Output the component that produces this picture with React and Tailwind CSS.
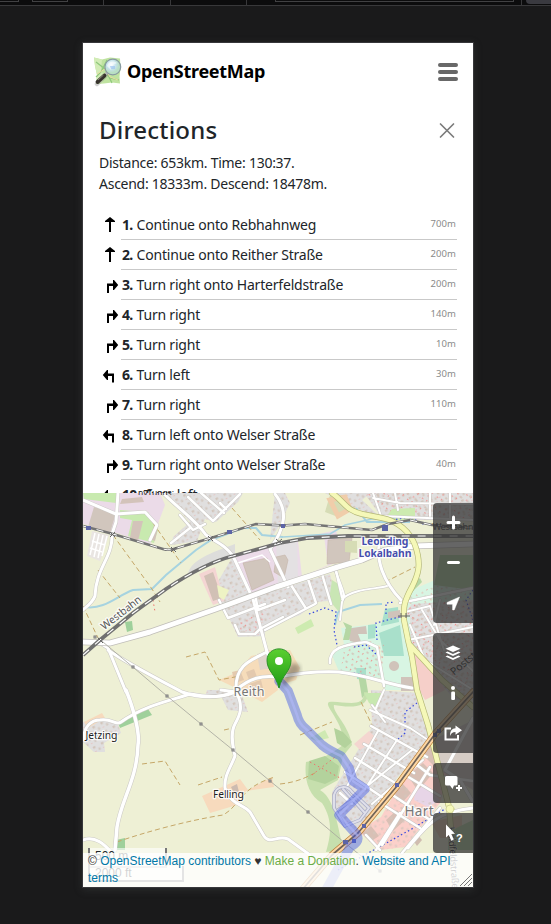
const steps = [
  ["up", "Continue onto Rebhahnweg", "700m"],
  ["up", "Continue onto Reither Straße", "200m"],
  ["right", "Turn right onto Harterfeldstraße", "200m"],
  ["right", "Turn right", "140m"],
  ["right", "Turn right", "10m"],
  ["left", "Turn left", "30m"],
  ["right", "Turn right", "110m"],
  ["left", "Turn left onto Welser Straße", ""],
  ["right", "Turn right onto Welser Straße", "40m"],
  ["left", "Turn left", ""],
];

function Turn({ kind }) {
  return (
    <svg width="20" height="20" viewBox="0 0 20 20" className="shrink-0">
      {kind === "up" && <path d="M10 17V7H6V6L11 2l5 4v1h-4v10z" fill="#000" />}
      {kind === "right" && <path d="M8 18V8.500h6V5h1l4.200 5-4.200 5h-1v-4h-4v7z" fill="#000" />}
      {kind === "left" && <path d="M15 17.500V8.500H9V5H8L3.800 10 8 15h1v-4h4v6.500z" fill="#000" />}
    </svg>
  );
}

function Logo() {
  return (
    <svg width="30" height="30" viewBox="0 0 30 30" className="shrink-0">
      <defs>
        <radialGradient id="lens" cx="40%" cy="35%">
          <stop offset="0" stopColor="#f4fbff" />
          <stop offset=".6" stopColor="#c5e2ea" />
          <stop offset="1" stopColor="#b9dfc4" />
        </radialGradient>
      </defs>
      <path d="M1 0.500l8 2 8-2 10 1 .5 10-1 8 .5 7-8-1-8 1-8 .500 1-9-2-9z" fill="#bfe3a0" />
      <path d="M1 .500l8 2-1 10 3 7-2 7-6 .500 1-9-2-9z" fill="#d2ecb6" />
      <path d="M3 5l9 7 4 8 3 6M14 3l-6 12-5 5M17 21l9 2" fill="none" stroke="#8fc97c" strokeWidth="1.200" />
      <path d="M4 17l8-5 5 8 8 3" fill="none" stroke="#e9dca2" />
      <path d="M13 18L4 27" stroke="#777" strokeWidth="4.500" strokeLinecap="round" opacity=".35" />
      <path d="M14.500 15.500L11 19" stroke="#b8b8b8" strokeWidth="2.500" />
      <path d="M11.500 18.500L4.500 25" stroke="#37332d" strokeWidth="3.800" strokeLinecap="round" />
      <path d="M10.500 18L5 23" stroke="#8b877e" strokeWidth="1" />
      <circle cx="19.800" cy="10" r="7.900" fill="url(#lens)" stroke="#889aa0" strokeWidth="1.200" />
      <path d="M14 9c1-4 6-6 10-3l-4 2-2 5z" fill="#fff" opacity=".55" />
      <path d="M17 9h5v3h-4z" fill="#9ec5f0" opacity=".7" />
    </svg>
  );
}

const casing = [
  [4.500, "M126 690C134 710 140 733 138 745C137 780 121 800 117 827L115 850"],
  [4, "M84 740C83 726 92 720 100 720C112 718 116 726 121 722C145 705 173 700 190 694C210 698 226 697 231 692"],
  [4, "M126 692L108 648L100 643"],
  [4, "M108 650C125 662 150 675 182 692C205 700 222 697 236 692"],
  [4, "M221 690L236 692C244 706 240 715 235 724C229 735 234 750 235 756C231 767 224 775 225 788C232 806 242 803 250 812L264 836C270 845 276 835 288 839L310 855"],
  [4, "M236 690C235 664 252 660 267 652L278 682M236 690C250 678 262 675 278 677"],
  [4, "M267 652L253 599L233 556C226 546 218 543 206 535C196 520 180 510 163 493"],
  [4, "M118 493L116 522L112 534C113 558 96 567 95 596C92 604 83 609 83 610"],
  [4, "M83 500L116 514L145 512L157 525L150 540"],
  [3.500, "M188 497L213 521L240 494M171 543L190 528M180 515L193 530L205 524M226 509L220 503M201 493L224 513"],
  [3.500, "M219 600L228 618L265 604M235 625L239 634L255 634L260 629L283 617M255 594L258 610L285 600"],
  [4, "M275 494C288 510 286 527 270 549L288 587M379 546C377 560 382 580 401 600"],
  [3, "M334 567C345 596 346 596 342 602L340 620M342 599C354 588 379 589 387 586"],
  [3.500, "M291 585L305 607M308 579L316 603M322 574L331 604M265 630L315 604M335 566L342 597M400 603L473 588"],
  [4, "M278 677C299 673 320 671 339 672C368 675 385 684 412 688"],
  [3.500, "M330 663C329 648 343 645 366 642L377 647L384 686"],
  [3, "M408 640L473 627M410 625L425 660L470 688M422 610L440 640L473 671M434 625L440 600M405 612L430 606L444 650"],
  [3, "M373 493L381 516L473 520M395 493L398 510M430 493V516M450 493V518M373 498L400 503L473 504"],
  [3.500, "M371 726L427 757M364 744L414 773M355 758L400 786M345 772L385 799M340 793L352 804"],
  [3, "M378 731L345 790M397 740L365 789M412 750L366 787M423 760L372 804M370 710L410 728L428 740M372 705L385 722M384 690L376 708"],
  [3.500, "M388 792L430 820M379 802L420 828M405 775L440 796M417 765L430 775L473 781M430 767L382 845M400 813L376 850M440 808L402 853M366 835L380 850"],
  [4, "M473 718L445 770L460 780L473 802M408 848C430 820 440 812 473 808"],
  [4, "M83 840C95 835 105 845 112 853"],
];

const RES = [
  "M163 493H243L238 502L216 522L205 519L197 541L172 545L173 537L190 522Z",
  "M213 590L233 556L252 596L219 604Z",
  "M221 608L283 588L330 574L336 600L318 602L300 615L265 628V636L238 637L230 620Z",
  "M277 493H371L362 500L380 517L350 506L325 493Z",
  "M275 493L285 493L290 503L278 528L270 540Z",
  "M364 493H473V520H400L381 516Z",
  "M83 722L100 718L117 722L121 733L104 743L105 752L94 752L83 742Z",
  "M207 690H240L248 712L228 710L222 698L205 697Z",
  "M405 600L473 588V700L455 700L412 652Z",
  "M371 690L420 693L432 737L392 784L355 836L334 812L332 792L352 760L372 727Z",
];

const UPPER_RAIL = "M83 526L113 534L163 549Q170 551 177 548L211 538L256 524L283 525.500L305 524L338 527L372 530L388 524L410 520L432 525L473 528";
const WESTBAHN = "M83 655L100 640L133 613L166 589Q205 563 233 556L280 543L308 538L348 536H473";
const MAIN_ROAD = "M83 642L110 643L150 632L216 609L276 587L338 567L362 560L385 550L415 546L473 544";
const YELLOW_ROAD = "M332 493C345 502 345 510 362 514L382 518C398 521 410 532 415 545C422 565 418 575 412 587C402 605 404 610 404 620L408 640L412 657L417 690L428 725L437 760L449 807L453 853M410 645L442 680L473 707";
const HIGHWAY = "M473 692L435 734L397 786L358 833L332 855L302 890";
const LOOPS = "M334 795C337 785 347 785 352 792L369 808L360 820L345 826L334 808ZM343 789L364 812M338 810L355 798";

function MapCanvas() {
  return (
    <svg width="390" height="394" viewBox="83 493 390 394" className="absolute inset-0">
      <defs>
        <pattern id="houses" width="9" height="9" patternUnits="userSpaceOnUse" patternTransform="rotate(-28)">
          <rect x="1" y="1" width="2.600" height="2.300" fill="#d3c6bc" />
          <rect x="5.500" y="4.500" width="2" height="2.600" fill="#d3c8bf" />
          <rect x="1.500" y="6" width="1" height="1" fill="#e8b5b0" />
        </pattern>
        <pattern id="reddots" width="11" height="10" patternUnits="userSpaceOnUse" patternTransform="rotate(38)">
          <rect x="1" y="2" width="1.500" height="1.100" fill="#f08b87" />
          <rect x="6" y="1" width="1" height="1.600" fill="#f08b87" />
          <rect x="4" y="6.500" width="1.500" height="1.100" fill="#f28e89" />
          <rect x="8.500" y="7" width="2" height="2" fill="#d3c3b8" />
        </pattern>
        <linearGradient id="pin" x1="0" y1="0" x2="0" y2="1">
          <stop offset="0" stopColor="#5bcf30" />
          <stop offset="1" stopColor="#1f9a14" />
        </linearGradient>
        <filter id="soft"><feGaussianBlur stdDeviation="2" /></filter>
      </defs>
      <rect x="83" y="493" width="390" height="394" fill="#eef0d5" />

      {/* Land use */}
      <path d="M83 493H160L165 505L150 545L120 534L83 524Z" fill="#ebdbe8" />
      <path d="M83 493H118L116 503L84 499ZM120 510L148 512L158 530L154 543L128 536L132 520L120 518Z" fill="#c8eaaf" />
      <path d="M94 507L116 513L110 533L88 527Z" fill="#d1c6bd" />
      <path d="M133 521L143 521L138 541L130 538ZM122 499L142 497L144 502L120 504ZM154 525L158 527L155 541L150 539Z" fill="#d3c3ba" />
      <path d="M92 531L109 535L100 561L87 556Z" fill="#e9e5e2" />
      <path d="M95 533L90 555M99 534L94 557M103 535L98 558M107 536L102 556M92 541L105 545M90 548L102 552" stroke="#fff" strokeWidth="1.500" />
      <path d="M188 573C192 560 210 553 235 544V556Q210 561 196 570Z" fill="#dddddb" />
      {RES.map((d) => <path key={d} d={d} fill="#e0dfdf" />)}
      {RES.map((d) => <path key={d} d={d} fill="url(#houses)" />)}
      <path d="M405 600L473 588V700L455 700L412 652ZM364 493H473V520H400ZM240 620L265 612L262 634L238 636Z" fill="url(#reddots)" />
      <path d="M233 556L283 543L336 530L342 560L283 585L252 594Z" fill="#ebdbe8" />
      <path d="M298 541L324 536L328 565L302 577Z" fill="#eef0d5" />
      <path d="M276 545L297 540L298 577L278 584Z" fill="#e4e1e3" />
      <path d="M243 563L267 558L274 580L252 590ZM276 557L285 555L288 560L284 578L274 572ZM328 540L352 538L349 562L327 564Z" fill="#d1c6bd" stroke="#c4b4a8" strokeWidth=".6" />
      <path d="M238 563L262 555L270 562M240 570L251 594" fill="none" stroke="#fff" strokeWidth="1.500" />
      <path d="M199 574L215 567L224 601L213 605Z" fill="#f4d5d3" />
      <path d="M204 576L213 572L222 598L213 601Z" fill="#d1c0b5" />
      <path d="M217 585L229 590L224 600L219 597Z" fill="#eef3c4" />
      <path d="M332 580L340 585L344 598L339 612L329 600Z" fill="#c9e6b4" />
      <path d="M295 628L311 619L314 626L298 634ZM392 509L415 508L415 520L384 520Z" fill="#cdebb0" />
      <path d="M345 541H357V553L345 552ZM330 495L345 495L352 508L338 517L325 512Z" fill="#d6dcb5" />
      <path d="M330 500L345 497L350 509L338 516Z" fill="none" stroke="#f0cdaa" strokeWidth="5" />
      <path d="M219 680L238 672L251 656L266 653L273 664L278 690L262 702L240 690Z" fill="#f6dcba" />
      <path d="M232 672l8-2 4 10-9 3zM246 672l8-3 3 8-8 3zM249 684l12-4 2 8-10 3z" fill="#e3c9ae" />
      <path d="M257 654L268 651L272 668L260 670Z" fill="#dfd4ca" />
      <path d="M268 650H290L300 668L296 680L276 686Z" fill="#f3dcb8" />
      <path d="M202 796L240 779L248 790L272 777L274 787L246 791L237 805L210 813Z" fill="#f7dabd" />
      <path d="M84 722L102 713L105 718L88 728Z" fill="#f7dabd" />
      <path d="M118 723L148 709L152 715L120 728ZM116 840L125 838V850H116ZM125 622L132 621L133 630L127 632Z" fill="#9fd09b" />
      <path d="M231 787l6-3 2 8-5 1z" fill="#cdbbb0" />

      {/* Parks, school grounds and woods */}
      <path d="M332 655L345 643L376 642L382 678L340 674Z" fill="#d3f2df" />
      <path d="M407 592L435 580H473V600L412 604L405 612ZM341 628L376 624L410 615L412 690H385L380 645L344 644Z" fill="#d8f5e3" />
      <path d="M368 625L376 624L375 638L368 639ZM379 633L400 625L404 656L384 656ZM385 609L398 607L399 622L381 626ZM356 668L366 668L366 680L357 679Z" fill="#a9e0cb" />
      <path d="M345 629L366 626L367 634L358 634L362 644L350 641ZM388 612L400 610V618L388 618ZM394 661a5 5 0 1 0 .1 0M401 677h18v14h-18z" fill="#d0c3ba" />
      <path d="M340 674L382 680L384 645L366 640L345 645Z" fill="url(#reddots)" />
      <path d="M405 595L470 577V600L410 610Z" fill="url(#reddots)" opacity=".7" />
      <path d="M343 622L352 626L349 640L343 640L346 628ZM358 674L366 680L368 692L362 698L360 686ZM410 586L420 578L422 582L412 592ZM440 555H473V590L434 585Z" fill="#b5d7a4" />
      <path d="M364 692C365 710 341 700 329 702C323 706 345 722 343 745C330 755 320 760 306 762C304 778 308 795 322 803C333 820 331 835 326 852L345 850C338 840 338 800 320 790L338 780L343 756L352 745C349 725 332 712 334 705C347 707 369 710 368 692Z" fill="#c6dfad" />
      <path d="M309 761L325 756L339 766L337 778L325 784L308 779ZM334 728l9 4 9 10-7 6-8-5z" fill="#b3d29c" />
      <path d="M310 738L325 730L329 738L316 741Z" fill="#cfe9b2" />
      <path d="M364 693h18l-5 15-8-5z" fill="#c8e8b0" />
      <path d="M354 744L369 731L377 739L360 750Z" fill="#f4d6d0" />
      <path d="M358 831L381 817L408 770L432 753L449 771L440 803L405 847L380 850Z" fill="#fbd0ca" />
      <path d="M408 776L423 763L433 773L418 791ZM393 790L402 783L411 793L401 804ZM362 833L371 826L379 836L370 842ZM386 820l11-10 8 10-12 11zM420 752l8-8 15 12 4 10-9 4z" fill="#d8c0b5" />
      <path d="M415 792L425 784L440 800L428 807L414 800Z" fill="#e7d5e7" />
      <path d="M358 831L381 817L408 785L415 800L440 803L405 847L380 850Z" fill="url(#houses)" opacity=".7" />
      <path d="M433 740L473 720V790L440 770Z" fill="#d6ccc5" />
      <path d="M427 815L440 820L462 815L462 838L440 838Z" fill="#edcdb2" />
      <path d="M413 840l5-5 4 5-5 6z" fill="#d0bdb0" />
      <path d="M412 648L433 665L445 690L425 700L417 685Z" fill="#f6cfc9" />
      <path d="M448 832L473 820V850H448Z" fill="#b7d8a8" />

      {/* Water */}
      <g fill="none" stroke="#a6d3e0">
        <path d="M85 607C105 610 118 595 133 590L152 589L166 575L196 550L211 540L243 528L256 528L262 535L283 537" strokeWidth="2" />
        <path d="M283 537L330 534L345 525L372 519L395 518" strokeWidth="1.500" />
        <path d="M338 612L360 605L382 604M338 612L335 625" strokeWidth="2" />
        <path d="M356 508L367 522L410 522" strokeWidth="2" />
      </g>

      {/* Tracks and paths */}
      <g fill="none" stroke="#c5a768" strokeWidth="1" strokeDasharray="5 3">
        <path d="M113 535L152 589L160 602M98 570L120 598M83 606L98 638M153 523L181 563M232 508L260 540M186 657L205 652L219 680L240 676" />
        <path d="M142 764L165 761L180 785M198 785L222 777M117 842C145 832 190 820 223 815C240 806 240 787 275 777M224 730L233 728M280 784C300 782 310 775 315 773M300 735L332 722M361 702L372 725M385 582L415 567" />
      </g>
      <g fill="none" stroke="#3547e0" strokeWidth="1.200" strokeDasharray="1.500 2.500">
        <path d="M309 614L325 608L336 612L334 630L338 650M377 640L376 623L403 616M386 614V603L395 602M278 677C310 670 340 671 360 674L412 689M354 647L366 645L377 655M395 742L405 733V712L417 703M473 590L466 600L473 620M392 520L410 517L425 525" />
        <path d="M338 870L370 852L410 830L445 809" />
      </g>
      <path d="M310 762L340 778M312 775L335 757M153 600l2 12" stroke="#ee706b" strokeWidth="1" strokeDasharray="1.500 3" />

      {/* Streets */}
      <g fill="none" strokeLinecap="round" strokeLinejoin="round">
        {casing.map(([w, d]) => <path key={d} d={d} stroke="#cbc9c5" strokeWidth={w} />)}
        {casing.map(([w, d]) => <path key={d} d={d} stroke="#fff" strokeWidth={w - 1} />)}
        <path d={MAIN_ROAD} stroke="#c0beb9" strokeWidth="6.500" />
        <path d={MAIN_ROAD} stroke="#fff" strokeWidth="5" />
        <path d={LOOPS} stroke="#a9acc6" strokeWidth="3.500" />
        <path d={LOOPS} stroke="#dfdfea" strokeWidth="2" />
        <path d={YELLOW_ROAD} stroke="#b3b676" strokeWidth="6" />
        <path d={YELLOW_ROAD} stroke="#f5f8b8" strokeWidth="4.700" />
        <circle cx="450" cy="809" r="4" fill="#f5f8b8" stroke="#d2d596" />
        <path d={HIGHWAY} stroke="#b77b33" strokeWidth="7" />
        <path d={HIGHWAY} stroke="#fcd6a4" strokeWidth="5.600" />
        <path d={HIGHWAY} stroke="#6d6258" strokeWidth="1.700" />
      </g>

      {/* Power line */}
      <path d="M97 637L134 668L167 696L201 724L233 750L270 781L308 812L345 843L380 871" fill="none" stroke="#a4a49c" strokeWidth=".8" />
      <g fill="#ddd" stroke="#777" strokeWidth="1">
        {[[133, 667], [167, 696], [201, 724], [233, 750], [270, 781], [308, 812], [95, 637], [380, 871]].map(([x, y]) => (
          <rect key={x} x={x - 1} y={y - 1} width="2" height="2" />
        ))}
      </g>

      {/* Railways */}
      <g fill="none">
        <path d={UPPER_RAIL} stroke="#747474" strokeWidth="2.600" />
        <path d={UPPER_RAIL} stroke="#fff" strokeWidth="1" strokeDasharray="7 7" />
        <path d={WESTBAHN} stroke="#707070" strokeWidth="3.800" />
        <path d={WESTBAHN} stroke="#fff" strokeWidth="1.200" strokeDasharray="8 8" />
        <path d="M110 532l5 5m-5 0l5-5M171 547l5 5m-5 0l5-5M208 536l5 5m-5 0l5-5M276 539l6 5m-6 0l6-5M98 638l5 5M401 613v5M406 613v5M398 616h12" stroke="#666" strokeWidth="1" />
      </g>
      <path d="M86 526h5v4h-5zM227 530h5v4h-5zM281 524h4v4h-4zM382 525h6v6h-6zM395 783h4v4h-4zM362 824h4v4h-4zM352 839h4v4h-4zM433 733h4v4h-4zM437 729h4v4h-4zM343 840h5v4h-5z" fill="#5c64a6" />

      {/* Labels */}
      <g fontFamily="'Noto Sans', sans-serif" stroke="#fff" strokeOpacity=".8" paintOrder="stroke" strokeWidth="2.500" strokeLinejoin="round" textAnchor="middle">
        <text x="122" y="616" fontSize="10.500" fill="#555" textLength="48" transform="rotate(-38 122 614)">Westbahn</text>
        <text x="385" y="545" fontSize="10.500" fontWeight="700" fill="#474fae" textLength="47">Leonding</text>
        <text x="385" y="557" fontSize="10.500" fontWeight="700" fill="#474fae" textLength="53">Lokalbahn</text>
        <text x="249" y="696" fontSize="12.500" fill="#777" textLength="31">Reith</text>
        <text x="101.500" y="739" fontSize="10.500" fill="#222" textLength="32">Jetzing</text>
        <text x="228.500" y="798" fontSize="10.500" fill="#222" textLength="31">Felling</text>
        <text x="419" y="816" fontSize="13.500" fill="#777" textLength="29">Hart</text>
        <text x="453" y="530" fontSize="9.500" fill="#444" stroke="none" textLength="41">Westbahn</text>
        <text x="474" y="659" fontSize="10.500" fill="#222" stroke="none" textLength="52" transform="rotate(-40 474 659)">Poststraße</text>
        <text x="450" y="858" fontSize="9.500" fill="#222" strokeWidth="1" textLength="62" transform="rotate(86 450 858)">Haidfeldstraße</text>
      </g>

      {/* Route and start marker */}
      <g fill="none" strokeLinecap="round" strokeLinejoin="round">
        <path d="M279 681L288 691L297 715Q299 724 306 729L322 745Q328 750 341 756L349 768L353 781L365 789L339 815L357 835Q360 842 350 847L326 890" stroke="#4159e8" strokeOpacity=".46" strokeWidth="9.500" />
        <path d="M279 681L288 691L297 715Q299 724 306 729L322 745Q328 750 341 756L349 768L353 781L365 789L339 815L357 835" stroke="#b2bafa" strokeOpacity=".55" strokeWidth="2.600" />
      </g>
      <path d="M281 689L299 673Q303 664 293 663Q285 667 281 689" fill="#000" opacity=".3" filter="url(#soft)" />
      <path d="M279 688C276 675 267 671 267 660.500C267 645 291 645 291 660.500C291 671 282 675 279 688Z" fill="url(#pin)" stroke="#2a9226" />
      <circle cx="279" cy="661" r="4" fill="#fff" />
    </svg>
  );
}

const icons = {
  plus: <path d="M15 19.500h11M20.500 14v11" stroke="#fff" strokeWidth="3" strokeLinecap="round" />,
  minus: <path d="M15.500 19.500h10" stroke="#fff" strokeWidth="3" strokeLinecap="round" />,
  locate: <path d="M26.500 14L14 19.500v1.700h5.600V27h1.600z" fill="#fff" stroke="#fff" strokeLinejoin="round" strokeWidth=".5" />,
  layers: (
    <g fill="#fff">
      <path d="M20 12.500l7.500 3.300-7.500 3.300-7.500-3.300z" />
      <path d="M12.500 19.500l2-1 5.500 2.400 5.500-2.400 2 1-7.500 3.400z" />
      <path d="M12.500 23.500l2-1 5.500 2.400 5.500-2.400 2 1-7.500 3.400z" />
    </g>
  ),
  info: <g fill="#fff"><circle cx="20" cy="15" r="2" /><rect x="18.200" y="18.500" width="3.800" height="8.500" rx="1.300" /></g>,
  share: (
    <g>
      <path d="M18 15.500h-5.500V26.500H25V22" fill="none" stroke="#fff" strokeWidth="2" />
      <path d="M22.500 12.500l6.500 4.700-6.500 4.600v-2.900c-3 0-4.500 1.300-5.500 4.100 0-5 2-7.500 5.500-7.700z" fill="#fff" />
    </g>
  ),
  note: (
    <g fill="#fff">
      <path d="M13.500 13h9.500q1.500 0 1.500 1.500V21q0 1.500-1.500 1.500h-2L19.500 26 17 22.500h-3.500q-1.500 0-1.500-1.500v-6.500q0-1.500 1.500-1.500z" />
      <path d="M25 22h2v2h2v2h-2v2h-2v-2h-2v-2h2z" />
    </g>
  ),
  query: <path d="M13 11.500l9 9.200-3.700.3 2.500 5.500-2.500 1.200-2.500-5.700-2.800 2.400z" fill="#fff" />,
};

const groups = [["plus", "minus", "locate"], ["layers", "info", "share"], ["note"], ["query"]];

function Controls() {
  return (
    <div className="absolute right-0 top-[10px] flex w-10 flex-col gap-[10px]">
      {groups.map((g) => (
        <div key={g[0]} className="flex flex-col overflow-hidden rounded-l bg-[#333333]/75">
          {g.map((name) => (
            <button key={name} className="relative block h-10 w-10">
              <svg width="40" height="40" viewBox="0 0 40 40" className="block">{icons[name]}</svg>
              {name === "query" && (
                <span className="absolute left-[23px] top-[17px] font-['Liberation_Sans',sans-serif] text-[11px] font-bold leading-4 text-white">?</span>
              )}
            </button>
          ))}
        </div>
      ))}
    </div>
  );
}

export default function App() {
  return (
    <div className="relative flex h-[924px] w-[551px] flex-col overflow-hidden bg-[#1a1a1b] font-['Noto_Sans',sans-serif] text-[#212529]">
      <div className="flex h-[6px] shrink-0 border-b border-[#38383a] bg-[#0c0c0d]">
        <div className="h-[2px] w-[19px] shrink-0 border-b border-r border-[#414143]" />
        <div className="ml-[13px] h-[2px] w-[36px] shrink-0 border-x border-b border-[#414143]" />
        <div className="ml-[35px] w-[68px] shrink-0 border-x border-[#38383a]" />
        <div className="w-[76px] shrink-0 border-r border-[#38383a]" />
        <div className="ml-[28px] h-[2px] w-[239px] shrink-0 border-x border-b border-[#414143]" />
        <div className="ml-[7px] w-px shrink-0 bg-[#38383a]" />
        <div className="ml-[4px] h-[4px] flex-1 rounded-bl bg-[#3a3a40]" />
      </div>

      <div className="ml-[82px] mt-[36px] h-[846px] w-[392px] shrink-0 border border-[#37373a] shadow-[0_2px_8px_#4a505055]">
        <div className="flex h-[450px] flex-col overflow-hidden bg-white">
          <header className="flex h-[57px] shrink-0 items-center pl-[10px] pr-[15px]">
            <Logo />
            <h1 className="ml-[4px] -mt-px whitespace-nowrap text-[18px] font-bold tracking-[-0.3px] text-black">OpenStreetMap</h1>
            <div className="ml-auto flex flex-col gap-[3px]">
              <span className="h-1 w-5 rounded-sm bg-[#686868]" />
              <span className="h-1 w-5 rounded-sm bg-[#686868]" />
              <span className="h-1 w-5 rounded-sm bg-[#686868]" />
            </div>
          </header>

          <section className="flex flex-col pl-4 pr-4">
            <div className="flex h-[52px] items-center justify-between pt-[7px]">
              <h2 className="whitespace-nowrap text-[24px] font-medium tracking-[0.2px]">Directions</h2>
              <svg width="20" height="20" viewBox="0 0 20 20">
                <path d="M3.500 4L16.500 17M16.500 4L3.500 17" stroke="#7c7c7c" strokeWidth="1.700" strokeLinecap="round" />
              </svg>
            </div>
            <p className="whitespace-nowrap text-[14px] leading-[21px] tracking-[-0.26px]">
              Distance: 653km. Time: 130:37.
              <br />
              Ascend: 18333m. Descend: 18478m.
            </p>
            <div className="mt-[16px] flex flex-col">
              {steps.map(([kind, text, distance], i) => (
                <div key={i} className="flex h-[30px] items-center">
                  <div className="w-[22px] shrink-0"><Turn kind={kind} /></div>
                  <div className="flex h-[30px] flex-1 items-center whitespace-nowrap border-b border-[#c9c9c9] pl-px pr-px text-[14px] tracking-[-0.2px]">
                    <b className="mr-[4px] tracking-[-0.7px]">{i + 1}.</b>
                    <span>{text}</span>
                    <span className="ml-auto text-[9.500px] tracking-[0.05px] text-[#8a8a8a]">{distance}</span>
                  </div>
                </div>
              ))}
            </div>
          </section>
        </div>

        <div className="relative h-[394px] overflow-hidden">
          <MapCanvas />
          <div className="absolute bottom-[19px] left-[5px] h-[20px] w-[79px] border-2 border-t-0 border-[#777] bg-white/60 pl-[5px] font-['Liberation_Sans',sans-serif] text-[12px] leading-[16px]">500 m</div>
          <div className="absolute bottom-[5px] left-[5px] h-[16px] w-[96px] border-2 border-t-0 border-[#777] bg-white/60 pl-[5px] font-['Liberation_Sans',sans-serif] text-[12px] leading-[14px]">2000 ft</div>
          <Controls />
          <div className="absolute inset-x-0 bottom-0 h-[34px] whitespace-nowrap bg-white/80 pl-[5px] font-['Liberation_Sans',sans-serif] text-[12px] leading-[17px] text-[#333]">
            © <span className="text-[#0078a8]">OpenStreetMap contributors</span> ♥ <span className="text-[#6cad47]">Make a Donation</span>. <span className="text-[#0078a8]">Website and API<br />terms</span>
          </div>
          <svg width="14" height="14" viewBox="0 0 14 14" className="absolute bottom-0 right-0">
            <path d="M1 13L13 1M5 13l8-8M9 13l4-4" stroke="#777" strokeWidth="1" />
          </svg>
        </div>
      </div>
      <div className="absolute left-[138px] top-[488px] h-[7px] overflow-hidden text-[8.500px] leading-[9px] tracking-[0px] text-[#222]">nyTungs:</div>
    </div>
  );
}
